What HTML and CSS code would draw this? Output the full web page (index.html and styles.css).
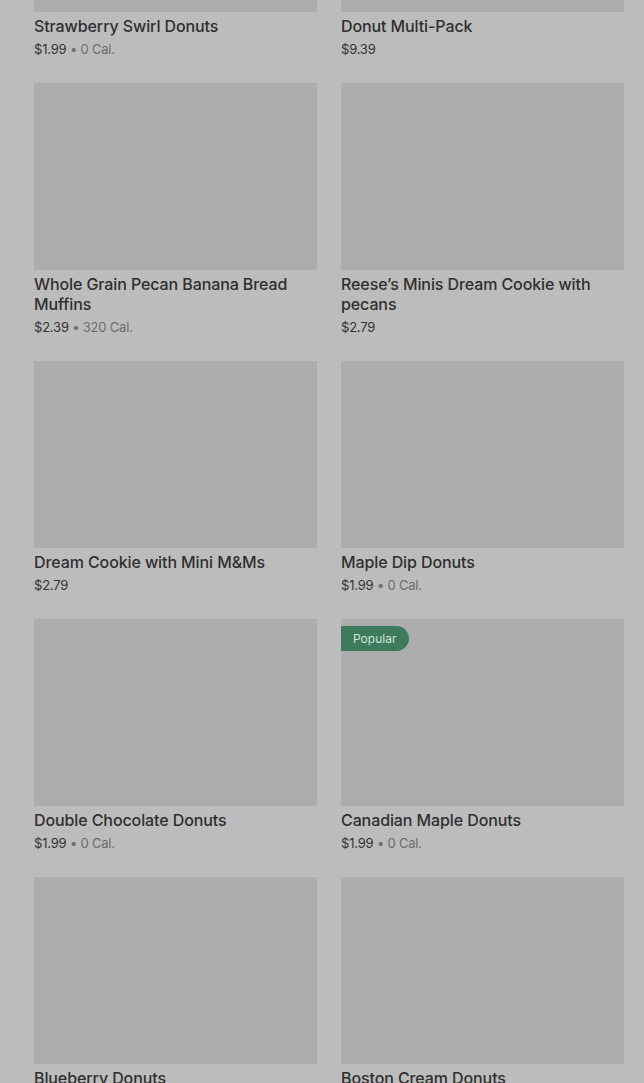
FILE: index.html
```html
<!DOCTYPE html>
<html lang="en">
<head>
    <meta charset="UTF-8">
    <meta name="viewport" content="width=device-width, initial-scale=1.0">
    <title>Bakery</title>
    <link rel="stylesheet" href="styles.css">
</head>
<body>
<div class="grid">
    <div class="item">
        <div class="thumb"></div>
        <div class="name">Strawberry Swirl Donuts</div>
        <div class="meta">$1.99 <span class="cal">• 0 Cal.</span></div>
    </div>
    <div class="item">
        <div class="thumb"></div>
        <div class="name">Donut Multi-Pack</div>
        <div class="meta">$9.39</div>
    </div>

    <div class="item">
        <div class="thumb"></div>
        <div class="name">Whole Grain Pecan Banana Bread Muffins</div>
        <div class="meta">$2.39 <span class="cal">• 320 Cal.</span></div>
    </div>
    <div class="item">
        <div class="thumb"></div>
        <div class="name">Reese’s Minis Dream Cookie with pecans</div>
        <div class="meta">$2.79</div>
    </div>

    <div class="item">
        <div class="thumb"></div>
        <div class="name">Dream Cookie with Mini M&amp;Ms</div>
        <div class="meta">$2.79</div>
    </div>
    <div class="item">
        <div class="thumb"></div>
        <div class="name">Maple Dip Donuts</div>
        <div class="meta">$1.99 <span class="cal">• 0 Cal.</span></div>
    </div>

    <div class="item">
        <div class="thumb"></div>
        <div class="name">Double Chocolate Donuts</div>
        <div class="meta">$1.99 <span class="cal">• 0 Cal.</span></div>
    </div>
    <div class="item">
        <div class="thumb">
            <span class="badge">Popular</span>
        </div>
        <div class="name">Canadian Maple Donuts</div>
        <div class="meta">$1.99 <span class="cal">• 0 Cal.</span></div>
    </div>

    <div class="item">
        <div class="thumb"></div>
        <div class="name">Blueberry Donuts</div>
        <div class="meta">$1.99 <span class="cal">• 0 Cal.</span></div>
    </div>
    <div class="item">
        <div class="thumb"></div>
        <div class="name">Boston Cream Donuts</div>
        <div class="meta">$1.99 <span class="cal">• 0 Cal.</span></div>
    </div>
</div>
</body>
</html>
```

FILE: styles.css
```css
html, body { margin: 0; padding: 0; background: #bcbcbc; overflow: hidden; }
body { font-family: Inter, "Noto Sans", sans-serif; color: #2f2f2f; }
.grid { display: grid; grid-template-columns: 283px 283px; column-gap: 24px; row-gap: 24px; padding: 0 20px 0 34px; margin-top: -175px; }
.item { display: flex; flex-direction: column; }
.thumb { position: relative; height: 187px; background: #adadad; }
.name { margin-top: 4px; font-size: 16px; line-height: 20px; font-weight: 500; color: #2f2f2f; letter-spacing: -0.1px; }
.meta { margin-top: 3px; font-size: 13px; line-height: 20px; color: #333; letter-spacing: -0.2px; }
.cal { color: #6d6d6d; }
.badge { position: absolute; left: 0; top: 7px; height: 25px; line-height: 25px; padding: 0 13px 0 12px; background: #3c7b5b; color: #d6e2db; font-size: 12px; border-radius: 0 13px 13px 0; }
```
